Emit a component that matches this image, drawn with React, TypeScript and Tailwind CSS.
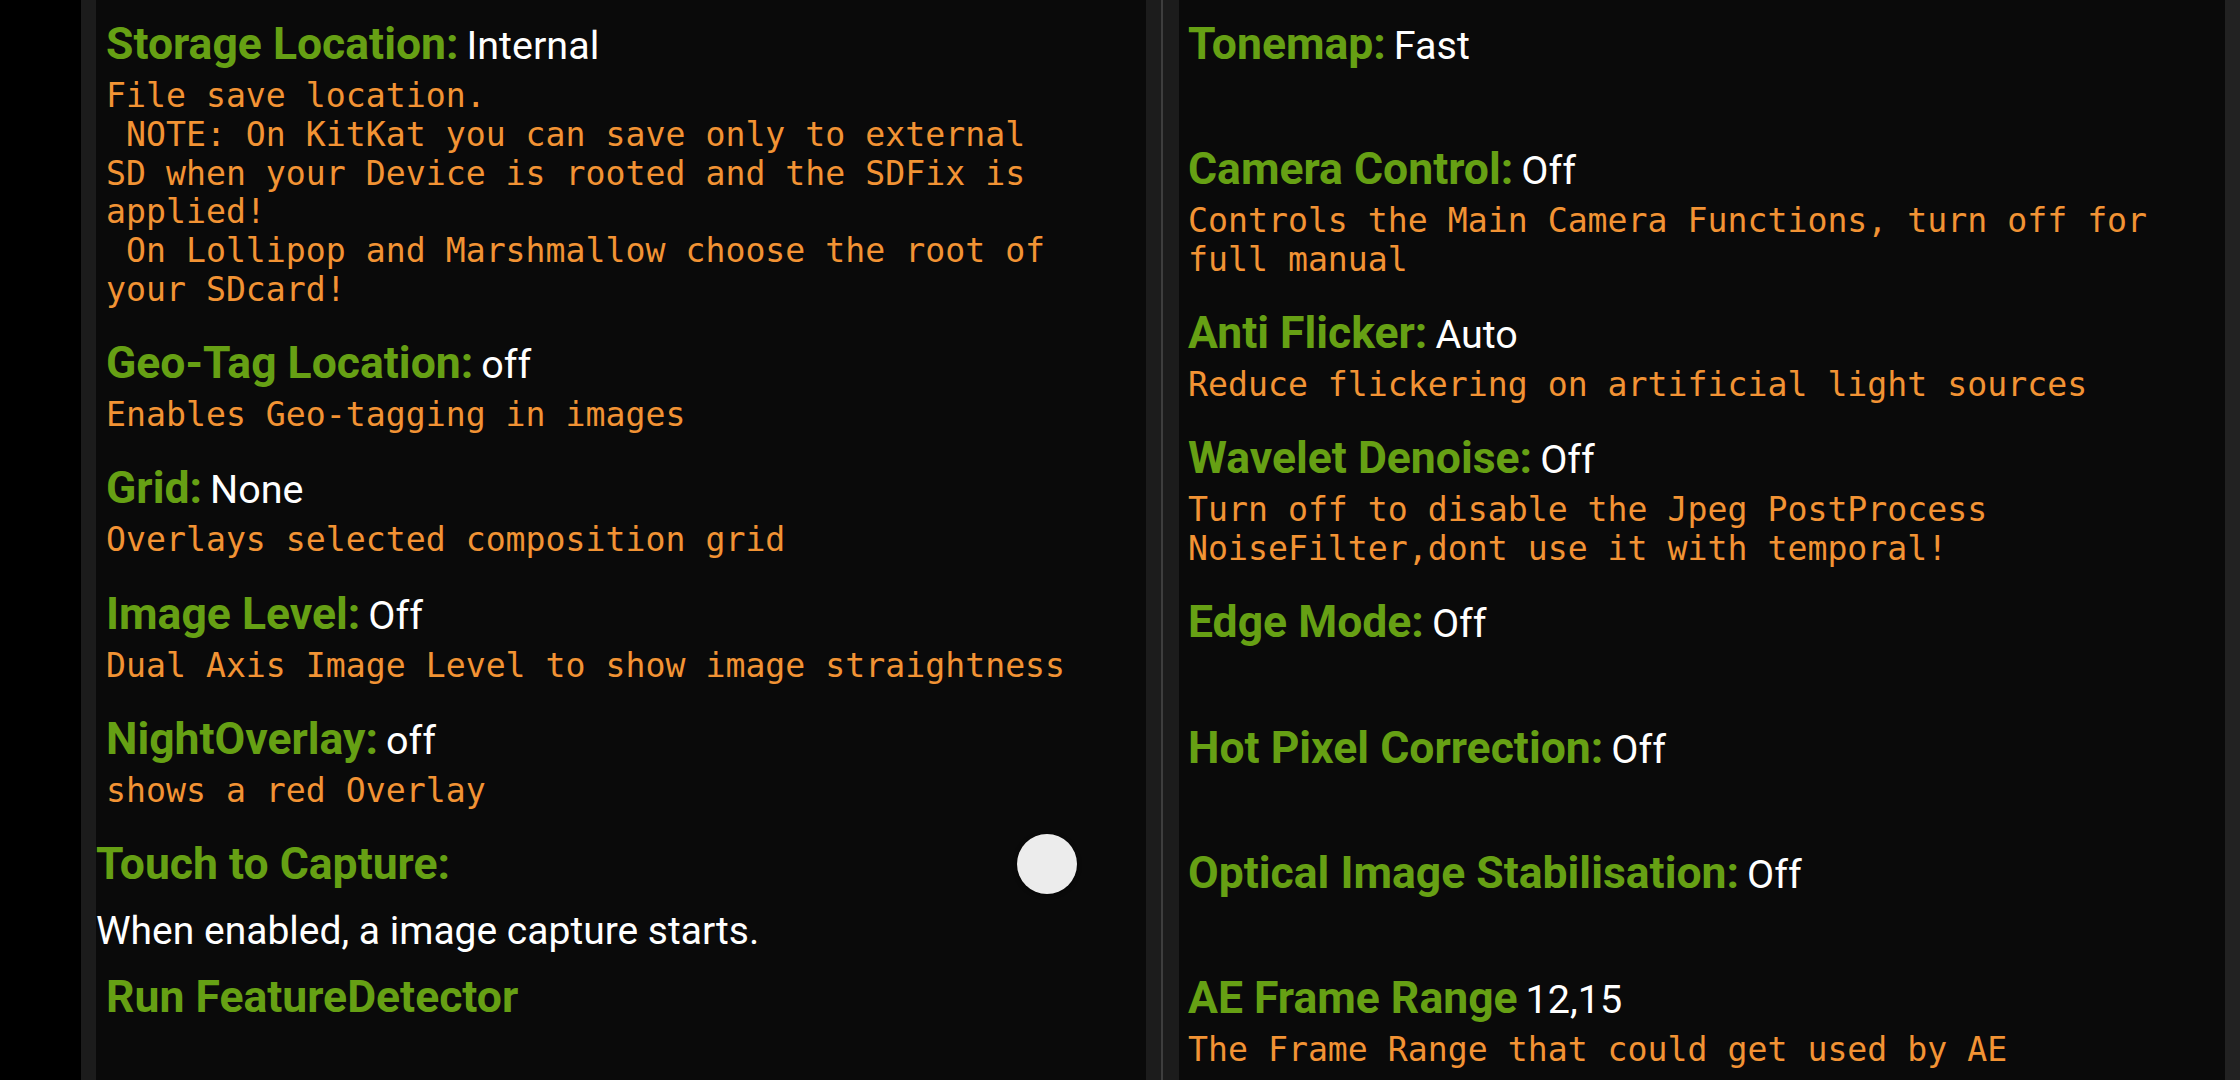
import React from "react";

type Item = { title: string; value?: string; lines: string[] };

const leftItems: Item[] = [
  {
    title: "Storage Location:",
    value: "Internal",
    lines: [
      "File save location.",
      " NOTE: On KitKat you can save only to external",
      "SD when your Device is rooted and the SDFix is",
      "applied!",
      " On Lollipop and Marshmallow choose the root of",
      "your SDcard!",
    ],
  },
  { title: "Geo-Tag Location:", value: "off", lines: ["Enables Geo-tagging in images"] },
  { title: "Grid:", value: "None", lines: ["Overlays selected composition grid"] },
  { title: "Image Level:", value: "Off", lines: ["Dual Axis Image Level to show image straightness"] },
  { title: "NightOverlay:", value: "off", lines: ["shows a red Overlay"] },
];

const rightItems: Item[] = [
  { title: "Tonemap:", value: "Fast", lines: [""] },
  {
    title: "Camera Control:",
    value: "Off",
    lines: ["Controls the Main Camera Functions, turn off for", "full manual"],
  },
  { title: "Anti Flicker:", value: "Auto", lines: ["Reduce flickering on artificial light sources"] },
  {
    title: "Wavelet Denoise:",
    value: "Off",
    lines: ["Turn off to disable the Jpeg PostProcess", "NoiseFilter,dont use it with temporal!"],
  },
  { title: "Edge Mode:", value: "Off", lines: [""] },
  { title: "Hot Pixel Correction:", value: "Off", lines: [""] },
  { title: "Optical Image Stabilisation:", value: "Off", lines: [""] },
  { title: "AE Frame Range", value: "12,15", lines: ["The Frame Range that could get used by AE"] },
];

const roboto = { fontFamily: "Roboto, 'Liberation Sans', sans-serif" } as const;
const mono = { fontFamily: "'DejaVu Sans Mono', 'Liberation Mono', monospace" } as const;

function Setting({ item }: { item: Item }) {
  return (
    <div className="flex flex-col">
      <div className="flex h-[52px] items-baseline leading-[52px] whitespace-nowrap" style={roboto}>
        <span className="text-[44.5px] font-bold text-[#66a014]">{item.title}</span>
        {item.value && <span className="ml-[8px] text-[39.5px] text-white">{item.value}</span>}
      </div>
      <div className="mt-[7px] text-[33.2px] leading-[38.8px] text-[#f29334]" style={mono}>
        {item.lines.map((l, i) => (
          <div key={i} className="h-[38.8px] whitespace-pre">
            {l}
          </div>
        ))}
      </div>
    </div>
  );
}

export default function App() {
  return (
    <div className="flex h-[1080px] w-[2240px] overflow-hidden bg-black">
      <div className="w-[81px] shrink-0 bg-black" />
      {/* Left column */}
      <div className="flex h-full w-[1080px] shrink-0">
        <div className="w-[15px] shrink-0 bg-[#1c1c1c]" />
        <div className="flex flex-1 flex-col bg-[#0a0a0a] pt-[18px]">
          <div className="flex flex-col gap-[27.4px] pl-[10px]">
            {leftItems.map((it) => (
              <Setting key={it.title} item={it} />
            ))}
          </div>
          <div className="mt-[27px] flex h-[52px] items-center justify-between pr-[69px]" style={roboto}>
            <span className="text-[44.5px] font-bold leading-[52px] text-[#66a014]">Touch to Capture:</span>
            <div className="h-[60px] w-[60px] rounded-full bg-[#ececec] shadow-[0_1px_4px_rgba(0,0,0,0.6)]" />
          </div>
          <div className="mt-[18px] text-[39px] leading-[46px] text-white" style={roboto}>
            When enabled, a image capture starts.
          </div>
          <div
            className="mt-[17px] pl-[10px] text-[44.5px] font-bold leading-[52px] text-[#66a014]"
            style={roboto}
          >
            Run FeatureDetector
          </div>
        </div>
        <div className="w-[15px] shrink-0 bg-[#1c1c1c]" />
      </div>
      {/* Right column */}
      <div className="flex h-full flex-1">
        <div className="w-[2px] shrink-0 bg-[#3e3e3e]" />
        <div className="w-[16px] shrink-0 bg-[#1c1c1c]" />
        <div className="flex flex-1 flex-col gap-[27.4px] bg-[#0a0a0a] pl-[9px] pt-[18px]">
          {rightItems.map((it) => (
            <Setting key={it.title} item={it} />
          ))}
        </div>
        <div className="w-[15px] shrink-0 bg-[#222222]" />
      </div>
    </div>
  );
}
